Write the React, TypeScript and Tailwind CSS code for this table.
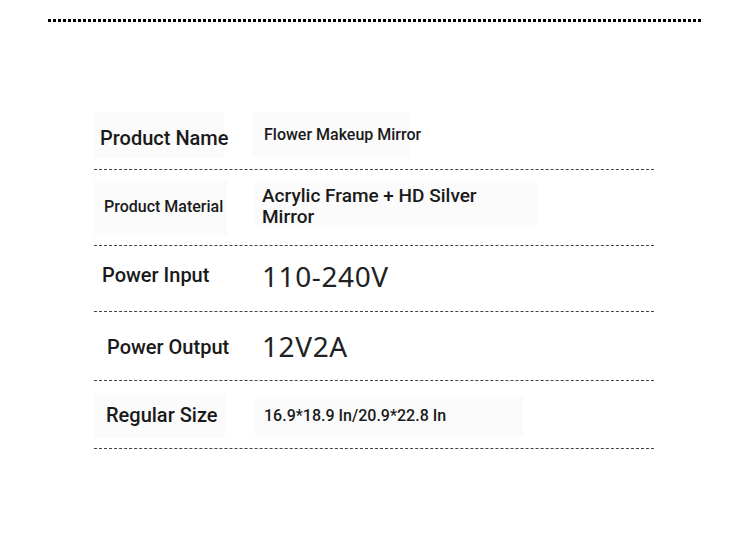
import React from "react";

const dots = Array.from({ length: 131 });

const App: React.FC = () => {
  return (
    <div className="w-[750px] h-[556px] bg-white overflow-hidden font-['Roboto',sans-serif] text-[#1a1a1a]">
      {/* dotted rule at top */}
      <div className="flex gap-[2px] ml-[48px] mt-[19px]">
        {dots.map((_, i) => (
          <div key={i} className="w-[3px] h-[3px] bg-black" />
        ))}
      </div>

      <div className="ml-[94px] mt-[78px] w-[560px]">
        {/* Product Name */}
        <div className="flex items-start h-[70px] border-b border-dashed border-[#444]">
          <div className="mt-[12px] w-[130px] h-[46px] pl-[6px] pt-[14px] bg-[#fbfbfb] text-[20px] leading-[24px] font-medium whitespace-nowrap">
            Product Name
          </div>
          <div className="mt-[12px] ml-[28px] w-[158px] h-[45px] pl-[12px] pt-[13px] bg-[#fbfbfb] text-[16px] leading-[20px] font-medium whitespace-nowrap">
            Flower Makeup Mirror
          </div>
        </div>

        {/* Product Material */}
        <div className="flex items-start h-[76px] border-b border-dashed border-[#444]">
          <div className="mt-[10px] w-[133px] h-[56px] pl-[10px] pt-[17px] bg-[#fbfbfb] text-[16px] leading-[19px] font-medium whitespace-nowrap">
            Product Material
          </div>
          <div className="mt-[13px] ml-[28px] w-[282px] h-[45px] pl-[7px] pt-[2px] bg-[#fbfbfb] text-[19px] leading-[21px] font-medium">
            <div className="w-[240px]">Acrylic Frame + HD Silver Mirror</div>
          </div>
        </div>

        {/* Power Input */}
        <div className="flex items-start h-[66px] border-b border-dashed border-[#444]">
          <div className="mt-[18px] ml-[8px] w-[160px] text-[20px] leading-[22px] font-medium whitespace-nowrap">
            Power Input
          </div>
          <div className="mt-[14px] font-['Noto_Sans',sans-serif] font-normal tracking-[0.6px] text-[28px] leading-[32px] text-[#222] whitespace-nowrap">
            110-240V
          </div>
        </div>

        {/* Power Output */}
        <div className="flex items-start h-[69px] border-b border-dashed border-[#444]">
          <div className="mt-[24px] ml-[13px] w-[155px] text-[20px] leading-[22px] font-medium whitespace-nowrap">
            Power Output
          </div>
          <div className="mt-[18px] font-['Noto_Sans',sans-serif] font-normal tracking-[0.6px] text-[28px] leading-[32px] text-[#222] whitespace-nowrap">
            12V2A
          </div>
        </div>

        {/* Regular Size */}
        <div className="flex items-start h-[68px] border-b border-dashed border-[#444]">
          <div className="mt-[12px] w-[131px] h-[45px] pl-[12px] pt-[11px] bg-[#fbfbfb] text-[20px] leading-[22px] font-medium whitespace-nowrap">
            Regular Size
          </div>
          <div className="mt-[16px] ml-[30px] w-[268px] h-[40px] pl-[9px] pt-[9px] bg-[#fbfbfb] text-[16px] leading-[20px] font-medium whitespace-nowrap">
            16.9*18.9 In/20.9*22.8 In
          </div>
        </div>
      </div>
    </div>
  );
};

export default App;
